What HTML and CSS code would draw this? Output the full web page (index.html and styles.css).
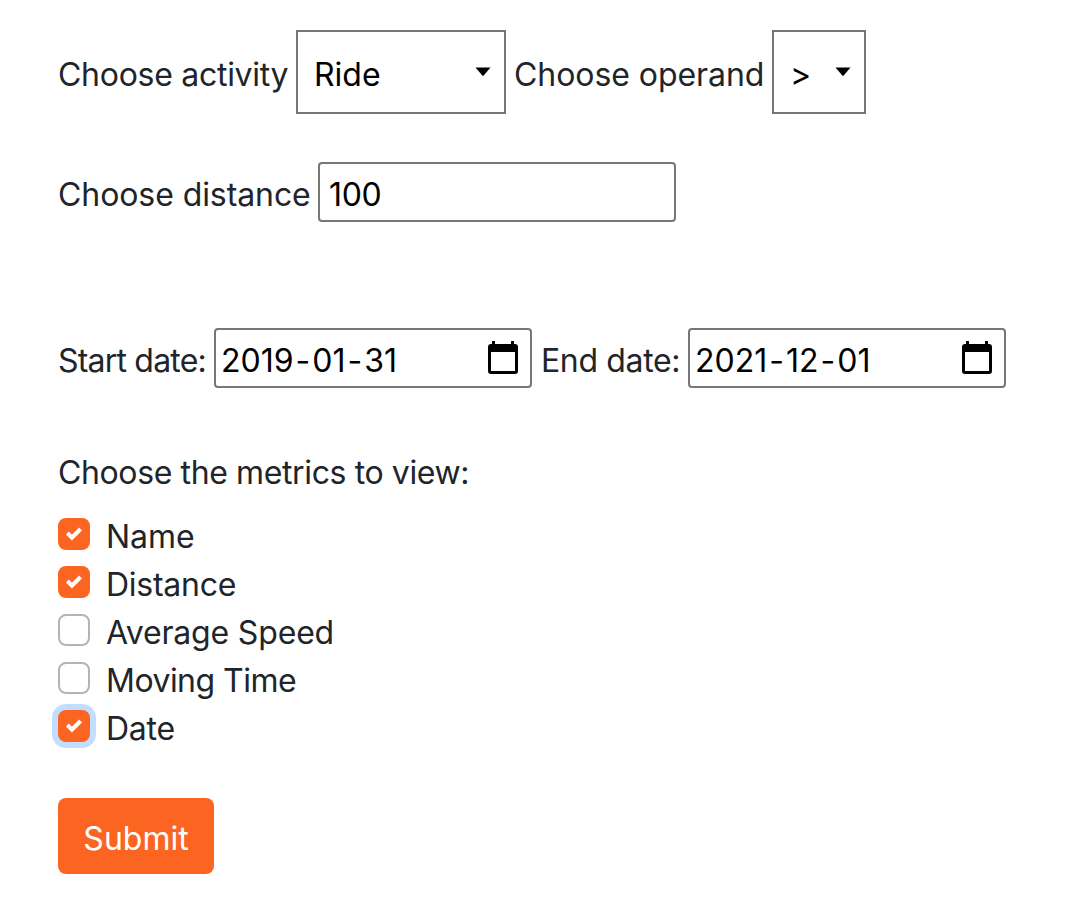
FILE: index.html
```html
<!DOCTYPE html>
<html lang="en">
<head>
<meta charset="utf-8">
<title>Activities</title>
<link rel="stylesheet" href="styles.css">
</head>
<body>
<form class="form">
  <div class="row row-activity">
    <span class="label w-activity">Choose activity</span>
    <div class="box select select-activity"><span>Ride</span><svg class="caret" width="16" height="10" viewBox="0 0 16 10"><path d="M0.5 0.5H15.5L8.7 8.6Q8 9.2 7.3 8.6Z"/></svg></div>
    <span class="label w-operand">Choose operand</span>
    <div class="box select select-operand"><span>&gt;</span><svg class="caret" width="16" height="10" viewBox="0 0 16 10"><path d="M0.5 0.5H15.5L8.7 8.6Q8 9.2 7.3 8.6Z"/></svg></div>
  </div>
  <div class="row row-distance">
    <span class="label w-distance">Choose distance</span>
    <div class="box input input-distance"><span>100</span></div>
  </div>
  <div class="row row-dates">
    <span class="label w-start">Start date:</span>
    <div class="box input input-date"><span>2019<i>-</i>01<i>-</i>31</span><svg class="calendar" width="30" height="34" viewBox="0 0 30 34"><path fill-rule="evenodd" d="M4 0H7V3H23V0H26V3H27Q30 3 30 6V30Q30 33 27 33H3Q0 33 0 30V6Q0 3 3 3H4ZM3 11V30H27V11Z"/></svg></div>
    <span class="label w-end">End date:</span>
    <div class="box input input-date"><span>2021<i>-</i>12<i>-</i>01</span><svg class="calendar" width="30" height="34" viewBox="0 0 30 34"><path fill-rule="evenodd" d="M4 0H7V3H23V0H26V3H27Q30 3 30 6V30Q30 33 27 33H3Q0 33 0 30V6Q0 3 3 3H4ZM3 11V30H27V11Z"/></svg></div>
  </div>
  <div class="heading">Choose the metrics to view:</div>
  <div class="checks">
    <div class="check"><span class="tick on"><svg width="16" height="16" viewBox="0 0 8 8"><path d="M6.564.75l-3.59 3.612-1.538-1.55L0 4.26l2.974 2.99L8 2.193z"/></svg></span><span class="name">Name</span></div>
    <div class="check"><span class="tick on"><svg width="16" height="16" viewBox="0 0 8 8"><path d="M6.564.75l-3.59 3.612-1.538-1.55L0 4.26l2.974 2.99L8 2.193z"/></svg></span><span class="name name-distance">Distance</span></div>
    <div class="check"><span class="tick"></span><span class="name name-speed">Average Speed</span></div>
    <div class="check"><span class="tick"></span><span class="name name-time">Moving Time</span></div>
    <div class="check"><span class="tick on focus"><svg width="16" height="16" viewBox="0 0 8 8"><path d="M6.564.75l-3.59 3.612-1.538-1.55L0 4.26l2.974 2.99L8 2.193z"/></svg></span><span class="name name-date">Date</span></div>
  </div>
  <button class="submit" type="button">Submit</button>
</form>
</body>
</html>
```
FILE: styles.css
```css
* { box-sizing: border-box; }
body {
  margin: 0;
  background: #fff;
  color: #212529;
  font: 400 32px/48px Inter, "Liberation Sans", sans-serif;
}
.form { padding: 30px 58px 0; white-space: nowrap; }
.row { display: flex; align-items: center; }
.row-activity { height: 84px; }
.row-distance { height: 60px; margin-top: 48px; }
.row-dates { height: 60px; margin-top: 106px; }
.label { padding-top: 6px; flex: none; }
.w-activity { width: 238px; letter-spacing: -0.28px; }
.w-operand { width: 266px; padding-left: 8px; letter-spacing: -0.06px; }
.w-distance { width: 260px; letter-spacing: -0.08px; }
.w-start { width: 156px; letter-spacing: -0.8px; }
.w-end { width: 156px; padding-left: 9px; letter-spacing: -0.36px; }
.box {
  display: flex;
  align-items: center;
  justify-content: space-between;
  flex: none;
  border: 2px solid #767676;
  color: #000;
  padding-top: 6px;
}
.select { height: 84px; padding-left: 16px; padding-right: 13px; }
.select-activity { width: 210px; }
.select-operand { width: 94px; padding-left: 16px; }
.caret { margin-top: -6px; }
.input { height: 60px; border-radius: 4px; }
.input-distance { width: 358px; padding-left: 9px; letter-spacing: -0.3px; }
.input-date { width: 318px; padding-left: 5px; padding-right: 12px; }
.input-date i { font-style: normal; padding: 0 2px; }
.calendar { margin-top: -7px; }
.heading { margin-top: 61px; height: 48px; letter-spacing: -0.38px; }
.checks { margin-top: 15px; }
.check { display: flex; height: 48px; }
.name { padding-top: 1px; }
.name-distance { letter-spacing: -0.25px; }
.name-speed { letter-spacing: -0.17px; }
.name-time { letter-spacing: -0.52px; }
.name-date { letter-spacing: -0.25px; }
.tick {
  width: 32px;
  height: 32px;
  margin: 6px 16px 0 0;
  border: 2px solid #adb5bd;
  border-radius: 8px;
  display: flex;
  align-items: center;
  justify-content: center;
}
.tick svg { fill: #fff; }
.on { background: #fc6421; border-color: #fc6421; }
.focus { box-shadow: 0 0 0 6px #c2deff; }
.submit {
  display: block;
  width: 156px;
  height: 76px;
  margin-top: 46px;
  padding: 6px 0 0;
  border: 0;
  border-radius: 8px;
  background: #fc6421;
  color: #fff;
  font: inherit;
}
```
